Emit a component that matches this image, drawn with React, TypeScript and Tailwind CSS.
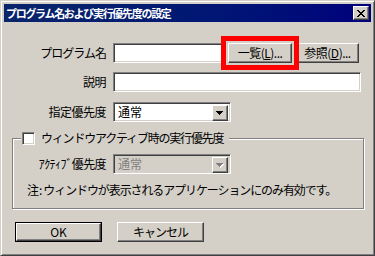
import React from "react";

const font = "font-['Noto_Sans_CJK_JP',sans-serif]";

function Raised({ className = "", children }: { className?: string; children?: React.ReactNode }) {
  return (
    <div
      className={
        "shrink-0 flex items-center justify-center bg-[#d4d0c8] border border-t-white border-l-white border-b-[#404040] border-r-[#404040] shadow-[inset_-1px_-1px_0_#808080,inset_1px_1px_0_#d4d0c8] " +
        className
      }
    >
      {children}
    </div>
  );
}

function Sunken({ className = "", children }: { className?: string; children?: React.ReactNode }) {
  return (
    <div
      className={
        "shrink-0 border border-t-[#808080] border-l-[#808080] border-b-white border-r-white shadow-[inset_1px_1px_0_#404040,inset_-1px_-1px_0_#d4d0c8] " +
        className
      }
    >
      {children}
    </div>
  );
}

function Arrow({ disabled }: { disabled?: boolean }) {
  return (
    <svg width="8" height="5" viewBox="0 0 8 5" className="block">
      {disabled && <path d="M1 1h7v1h-1v1h-1v1h-1v1h-1v-1h-1v-1h-1v-1h-1z" fill="#fff" />}
      <path d="M0 0h7v1h-1v1h-1v1h-1v1h-1v-1h-1v-1h-1v-1h-1z" fill={disabled ? "#808080" : "#000"} />
    </svg>
  );
}

function Select({ value, disabled }: { value: string; disabled?: boolean }) {
  return (
    <Sunken className={"w-[118px] h-[20px] flex items-stretch p-[2px] " + (disabled ? "bg-[#d4d0c8]" : "bg-white")}>
      <div className={"flex-1 flex items-center pl-[2px] text-[12px] leading-none " + (disabled ? "text-[#808080]" : "text-black")}>
        {value}
      </div>
      <Raised className="w-[16px] h-[16px]">
        <Arrow disabled={disabled} />
      </Raised>
    </Sunken>
  );
}

export default function App() {
  return (
    <div className={"w-[375px] h-[256px] bg-[#d4d0c8] " + font}>
      <div className="w-[375px] h-[256px] border border-t-[#d4d0c8] border-l-[#d4d0c8] border-b-[#404040] border-r-[#404040] shadow-[inset_1px_1px_0_#fff,inset_-1px_-1px_0_#808080] p-[3px] flex flex-col">
        {/* title bar */}
        <div className="shrink-0 h-[18px] flex items-center justify-between bg-gradient-to-r from-[#0a246a] to-[#00007c] pl-[2px] pr-[2px]">
          <span className="text-white font-bold text-[11px] leading-none tracking-[-1.3px]">
            プログラム名および実行優先度の設定
          </span>
          <Raised className="w-[16px] h-[14px]">
            <svg width="8" height="7" viewBox="0 0 8 7" className="block">
              <path d="M0 0h2v1h1v1h2v-1h1v-1h2v1h-1v1h-1v1h-1v1h1v1h1v1h1v1h-2v-1h-1v-1h-2v1h-1v1h-2v-1h1v-1h1v-1h1v-1h-1v-1h-1v-1h-1z" fill="#000" />
            </svg>
          </Raised>
        </div>

        {/* body */}
        <div className="shrink-0 flex flex-col text-[12px] leading-none text-black">
          {/* row 1 */}
          <div className="shrink-0 flex items-center h-[20px] mt-[21px]">
            <div className="w-[102px] text-right tracking-[-1px]">プログラム名</div>
            <Sunken className="ml-[7px] w-[112px] h-[20px] bg-white" />
            <div className="relative ml-[3px] shrink-0">
              <Raised className="w-[64px] h-[20px]">
                <span className="tracking-[-0.5px]">一覧(<span className="underline">L</span>)...</span>
              </Raised>
              <div className="absolute left-[-7px] top-[-7px] w-[78px] h-[34px] border-[5px] border-[#ff0000]" />
            </div>
            <Raised className="ml-[4px] w-[63px] h-[20px]">
              <span className="tracking-[-0.5px]">参照(<span className="underline">D</span>)...</span>
            </Raised>
          </div>

          {/* row 2 */}
          <div className="shrink-0 flex items-center h-[20px] mt-[9px]">
            <div className="w-[102px] text-right tracking-[-0.5px]">説明</div>
            <Sunken className="ml-[7px] w-[248px] h-[20px] bg-white" />
          </div>

          {/* row 3 */}
          <div className="shrink-0 flex items-center h-[20px] mt-[10px]">
            <div className="w-[102px] text-right tracking-[-0.5px]">指定優先度</div>
            <div className="ml-[7px]">
              <Select value="通常" />
            </div>
          </div>

          {/* group box */}
          <div className="shrink-0 ml-[8px] mt-[16px] w-[352px] h-[71px] border border-[#808080] shadow-[1px_1px_0_#fff,inset_1px_1px_0_#fff] flex flex-col">
            <div className="shrink-0 flex items-center h-[14px] -mt-[8px] ml-[8px]">
              <div className="flex items-center bg-[#d4d0c8] pl-[1px] pr-[6px]">
                <Sunken className="w-[13px] h-[13px] bg-white" />
                <span className="ml-[6px] tracking-[-1.2px]">ウィンドウアクティブ時の実行優先度</span>
              </div>
            </div>
            <div className="shrink-0 flex items-center h-[20px] mt-[9px]">
              <div className="w-[93px] text-right tracking-[-0.6px]">ｱｸﾃｨﾌﾞ優先度</div>
              <div className="ml-[7px]">
                <Select value="通常" disabled />
              </div>
            </div>
            <div className="shrink-0 ml-[14px] mt-[10px] flex">
              <span>注</span>
              <span className="mr-[1px]">:</span>
              <span className="tracking-[-1.1px]">ウィンドウが表示されるアプリケーションにのみ有効です。</span>
            </div>
          </div>

          {/* buttons */}
          <div className="shrink-0 flex mt-[13px] ml-[11px]">
            <div className="w-[87px] h-[20px] border border-black">
              <Raised className="w-full h-full">OK</Raised>
            </div>
            <Raised className="ml-[15px] w-[87px] h-[20px]">
              <span className="tracking-[-1px]">キャンセル</span>
            </Raised>
          </div>
        </div>
      </div>
    </div>
  );
}
